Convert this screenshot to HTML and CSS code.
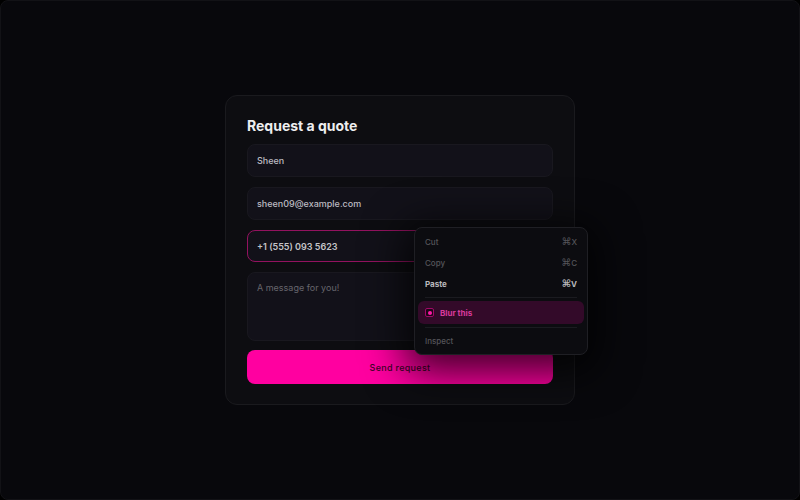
FILE: index.html
```html
<!DOCTYPE html>
<html lang="en">
<head>
    <meta charset="UTF-8">
    <meta name="viewport" content="width=device-width, initial-scale=1.0">
    <title>Request a quote</title>
    <link rel="stylesheet" href="styles.css">
</head>
<body>
    <div class="stage">
        <div class="quote-card">
            <h2>Request a quote</h2>
            <form class="quote-form">
                <div class="field">Sheen</div>
                <div class="field">sheen09@example.com</div>
                <div class="field field-active">+1 (555) 093 5623</div>
                <div class="field field-message">A message for you!</div>
                <button type="button" class="send-button">Send request</button>
            </form>

            <div class="context-menu">
                <div class="menu-item"><span>Cut</span><span class="shortcut"><i>⌘</i>X</span></div>
                <div class="menu-item"><span>Copy</span><span class="shortcut"><i>⌘</i>C</span></div>
                <div class="menu-item menu-item-strong"><span>Paste</span><span class="shortcut"><i>⌘</i>V</span></div>
                <div class="menu-divider"></div>
                <div class="menu-selected">
                    <span class="check-box"><span class="check-dot"></span></span>
                    <span>Blur this</span>
                </div>
                <div class="menu-divider"></div>
                <div class="menu-item menu-item-last"><span>Inspect</span></div>
            </div>
        </div>
    </div>
</body>
</html>
```

FILE: styles.css
```css
* {
    box-sizing: border-box;
}
body {
    margin: 0;
    padding: 0;
    height: 100vh;
    background-color: #000;
    font-family: "Inter", "Noto Sans", sans-serif;
    overflow: hidden;
}
.stage {
    height: 100%;
    display: flex;
    justify-content: center;
    align-items: center;
    background-color: #08080c;
    border: 1px solid #121216;
    border-radius: 8px;
}
.quote-card {
    position: relative;
    width: 350px;
    height: 310px;
    padding: 20px 21px;
    background-color: #0d0d11;
    border: 1px solid #1a1a1e;
    border-radius: 12px;
}
.quote-card h2 {
    margin: 0 0 8px;
    font-size: 14px;
    line-height: 20px;
    font-weight: 700;
    color: #eeeef0;
}
.quote-form {
    display: flex;
    flex-direction: column;
    gap: 10px;
}
.field {
    height: 33px;
    padding: 0 9px;
    display: flex;
    align-items: center;
    font-size: 9px;
    font-weight: 500;
    color: #bdbbc2;
    background-color: #121119;
    border: 1px solid #19181f;
    border-radius: 8px;
}
.field-active {
    height: 32px;
    font-weight: 600;
    color: #c4c3c8;
    border-color: #93125f;
}
.field-message {
    height: 69px;
    padding-top: 9px;
    align-items: flex-start;
    font-weight: 400;
    color: #66656c;
}
.send-button {
    height: 34px;
    margin-top: -1px;
    font-family: inherit;
    font-size: 9px;
    font-weight: 500;
    letter-spacing: 0.3px;
    color: #3d0526;
    background: #ff00a0;
    border: none;
    border-radius: 8px;
}
.context-menu {
    position: absolute;
    left: 188px;
    top: 131px;
    width: 174px;
    height: 128px;
    padding: 3px;
    background-color: #0c0c10;
    border: 1px solid #1f1f24;
    border-radius: 8px;
    box-shadow: 0 8px 40px 10px rgba(0, 0, 0, 0.75);
}
.menu-item {
    height: 21px;
    padding: 0 7px;
    display: flex;
    justify-content: space-between;
    align-items: center;
    font-size: 8px;
    font-weight: 500;
    color: #55555a;
}
.menu-item-strong {
    font-weight: 700;
    color: #b9b9bd;
}
.menu-item-last {
    height: 19px;
}
.shortcut {
    font-size: 8px;
}
.shortcut i {
    font-family: "DejaVu Sans", sans-serif;
    font-size: 10px;
    font-style: normal;
}
.menu-divider {
    height: 1px;
    margin: 3px 7px;
    background-color: #1b1b20;
}
.menu-selected {
    height: 23px;
    padding: 0 7px;
    display: flex;
    align-items: center;
    gap: 6px;
    font-size: 8px;
    font-weight: 700;
    color: #d93a9c;
    background-color: #330a29;
    border-radius: 6px;
}
.check-box {
    width: 9px;
    height: 9px;
    display: flex;
    justify-content: center;
    align-items: center;
    border: 1px solid #a00a68;
    border-radius: 2px;
    background-color: #1c0616;
}
.check-dot {
    width: 4px;
    height: 4px;
    border-radius: 50%;
    background-color: #ff1aa8;
}
```
